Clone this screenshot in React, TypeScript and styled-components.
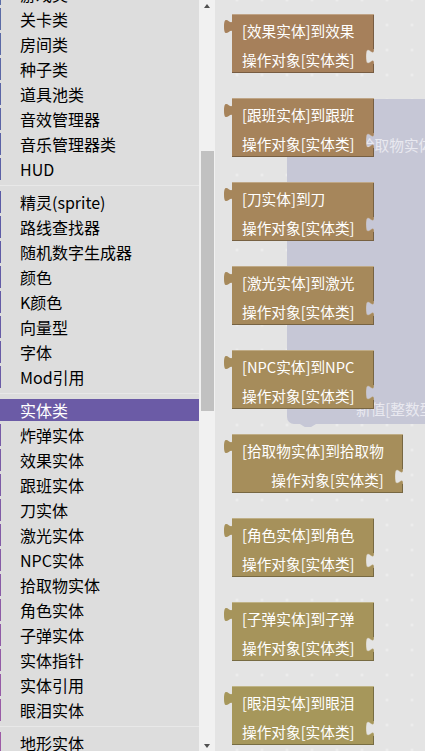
import React from 'react';
import styled, { createGlobalStyle } from 'styled-components';

const GlobalStyle = createGlobalStyle`
  html, body { margin: 0; padding: 0; overflow: hidden; background: #e4e4e4; }
  body { font-family: "Noto Sans CJK SC", "Noto Sans", sans-serif; }
`;

function hsv(h: number, s = 0.45, v = 0.65, k = 1): string {
  const c = v * s;
  const x = c * (1 - Math.abs(((h / 60) % 2) - 1));
  const m = v - c;
  let r = 0, g = 0, b = 0;
  if (h < 60) [r, g, b] = [c, x, 0];
  else if (h < 120) [r, g, b] = [x, c, 0];
  else if (h < 180) [r, g, b] = [0, c, x];
  else if (h < 240) [r, g, b] = [0, x, c];
  else if (h < 300) [r, g, b] = [x, 0, c];
  else [r, g, b] = [c, 0, x];
  const f = (n: number) => Math.round(Math.min(255, (n + m) * 255 * k));
  return `rgb(${f(r)}, ${f(g)}, ${f(b)})`;
}

const Page = styled.div`
  display: flex;
  width: 425px;
  height: 751px;
  overflow: hidden;
`;

const Toolbox = styled.div`
  width: 199px;
  flex: none;
  height: 100%;
  background: #dddddd;
  overflow: hidden;
`;

const ToolList = styled.div`
  margin-top: -17px;
  display: flex;
  flex-direction: column;
`;

const Row = styled.div<{ $color: string; $selected?: boolean }>`
  height: 22px;
  line-height: 22px;
  margin-bottom: 3px;
  border-left: 1px solid ${(p) => p.$color};
  padding-left: 19px;
  font-size: 16px;
  color: ${(p) => (p.$selected ? '#ffffff' : '#000000')};
  background: ${(p) => (p.$selected ? p.$color : 'transparent')};
  white-space: nowrap;
`;

const Separator = styled.div`
  height: 1px;
  margin: 2px 0 5px;
  background: #e8e8e8;
`;

const ScrollTrack = styled.div`
  width: 16px;
  flex: none;
  height: 100%;
  background: #f1f1f1;
  display: flex;
  flex-direction: column;
`;

const ArrowBtn = styled.div<{ $down?: boolean }>`
  height: 11px;
  display: flex;
  align-items: center;
  justify-content: center;
  margin-top: ${(p) => (p.$down ? 'auto' : '0')};
  &::after {
    content: '';
    width: 0;
    height: 0;
    border-left: 3.5px solid transparent;
    border-right: 3.5px solid transparent;
    ${(p) => (p.$down ? 'border-top: 4px solid #505050;' : 'border-bottom: 4px solid #505050;')}
  }
`;

const Thumb = styled.div<{ $top: number; $height: number }>`
  margin: ${(p) => p.$top}px 1px 0 2px;
  height: ${(p) => p.$height}px;
  background: #c1c1c1;
`;

const Workspace = styled.div`
  flex: 1;
  position: relative;
  height: 100%;
  overflow: hidden;
  background-color: #e4e4e4;
  background-image: radial-gradient(circle, #eeeeee 1px, transparent 1.6px);
  background-size: 25px 25px;
  background-position: 9.5px -12.5px;
`;

const GhostBlock = styled.div`
  position: absolute;
  left: 72px;
  top: 99px;
  right: -20px;
  height: 325px;
  background: #c6c7d6;
  border-radius: 0 0 0 7px;
  &::after {
    content: '';
    position: absolute;
    left: 13px;
    bottom: -3px;
    width: 16px;
    height: 3px;
    background: #c6c7d6;
    clip-path: polygon(0 0, 100% 0, 70% 100%, 30% 100%);
  }
`;

const GhostText = styled.div<{ $x: number; $y: number }>`
  position: absolute;
  left: ${(p) => p.$x}px;
  top: ${(p) => p.$y}px;
  font-size: 14.67px;
  line-height: 20px;
  color: #e9e9f0;
  white-space: nowrap;
`;

const Flyout = styled.div`
  position: relative;
  z-index: 1;
  display: flex;
  flex-direction: column;
  align-items: flex-start;
  gap: 25px;
  padding: 14px 0 0 9px;
`;

const BlockWrap = styled.div`
  display: flex;
  height: 59px;
`;

const BlockBody = styled.div<{ $c: string; $dark: string; $light: string }>`
  box-sizing: border-box;
  height: 59px;
  background: ${(p) => p.$c};
  border-top: 1px solid ${(p) => p.$light};
  border-bottom: 1px solid ${(p) => p.$dark};
  padding: 2px 11px 0 10px;
  display: flex;
  flex-direction: column;
`;

const Line = styled.div<{ $end?: boolean }>`
  height: ${(p) => (p.$end ? 24 : 27)}px;
  line-height: ${(p) => (p.$end ? 24 : 27)}px;
  margin-top: ${(p) => (p.$end ? 4 : 0)}px;
  align-self: ${(p) => (p.$end ? 'flex-end' : 'flex-start')};
  font-size: 14.67px;
  color: #ffffff;
  white-space: nowrap;
`;

const Piece = styled.svg`
  flex: none;
  display: block;
`;

type BlockProps = { title: string; hue: number };

function Block({ title, hue }: BlockProps) {
  const c = hsv(hue);
  const dark = hsv(hue, 0.45, 0.65, 0.72);
  const light = hsv(hue, 0.3, 0.75);
  return (
    <BlockWrap>
      <Piece width="8" height="59" viewBox="0 0 8 59">
        <path d="M8.5,5 C8.5,15 0,-3 0,12.5 C0,28 8.5,10 8.5,20 Z" fill={c} />
      </Piece>
      <BlockBody $c={c} $dark={dark} $light={light}>
        <Line>{title}</Line>
        <Line $end>操作对象[实体类]</Line>
      </BlockBody>
      <Piece width="8" height="59" viewBox="0 0 8 59">
        <path d="M-0.5,0 H8 V35 C8,45 0,27 0,42.5 C0,58 8,40 8,50 V59 H-0.5 Z" fill={c} />
        <path d="M8,35 C8,45 0,27 0,42.5 C0,58 8,40 8,50" fill="none" stroke={light} strokeWidth="0.8" opacity="0.6" />
        <path d="M7.5,0 V35 M7.5,50 V59" fill="none" stroke={dark} strokeWidth="1" />
        <path d="M0,0.5 H8" stroke={light} strokeWidth="1" />
        <path d="M0,58.5 H8" stroke={dark} strokeWidth="1" />
      </Piece>
    </BlockWrap>
  );
}

type Item = { label: string; hue: number; selected?: boolean } | 'sep';

const group1 = ['游戏类', '关卡类', '房间类', '种子类', '道具池类', '音效管理器', '音乐管理器类', 'HUD'];
const group2 = ['精灵(sprite)', '路线查找器', '随机数字生成器', '颜色', 'K颜色', '向量型', '字体', 'Mod引用'];
const group3 = ['炸弹实体', '效果实体', '跟班实体', '刀实体', '激光实体', 'NPC实体', '拾取物实体', '角色实体', '子弹实体', '实体指针', '实体引用', '眼泪实体'];

const items: Item[] = [
  ...group1.map((label, i) => ({ label, hue: 226 + (i * 10) / 7 })),
  'sep',
  ...group2.map((label, i) => ({ label, hue: 240 + (i * 12) / 7 })),
  'sep',
  { label: '实体类', hue: 253, selected: true },
  ...group3.map((label, i) => ({ label, hue: 262 + (i * 28) / 11 })),
  'sep',
  { label: '地形实体', hue: 293 },
];

const blocks = [
  '[效果实体]到效果',
  '[跟班实体]到跟班',
  '[刀实体]到刀',
  '[激光实体]到激光',
  '[NPC实体]到NPC',
  '[拾取物实体]到拾取物',
  '[角色实体]到角色',
  '[子弹实体]到子弹',
  '[眼泪实体]到眼泪',
];

export default function App() {
  return (
    <>
      <GlobalStyle />
      <Page>
        <Toolbox>
          <ToolList>
            {items.map((it, i) =>
              it === 'sep' ? (
                <Separator key={i} />
              ) : (
                <Row key={i} $color={hsv(it.hue)} $selected={it.selected}>
                  {it.label}
                </Row>
              )
            )}
          </ToolList>
        </Toolbox>
        <ScrollTrack>
          <ArrowBtn />
          <Thumb $top={140} $height={260} />
          <ArrowBtn $down />
        </ScrollTrack>
        <Workspace>
          <GhostBlock>
            <GhostText $x={68} $y={36}>[拾取物实体]</GhostText>
            <GhostText $x={69} $y={300}>新值[整数型]</GhostText>
          </GhostBlock>
          <Flyout>
            {blocks.map((t, i) => (
              <Block key={i} title={t} hue={30 + i * 2.25} />
            ))}
          </Flyout>
        </Workspace>
      </Page>
    </>
  );
}
